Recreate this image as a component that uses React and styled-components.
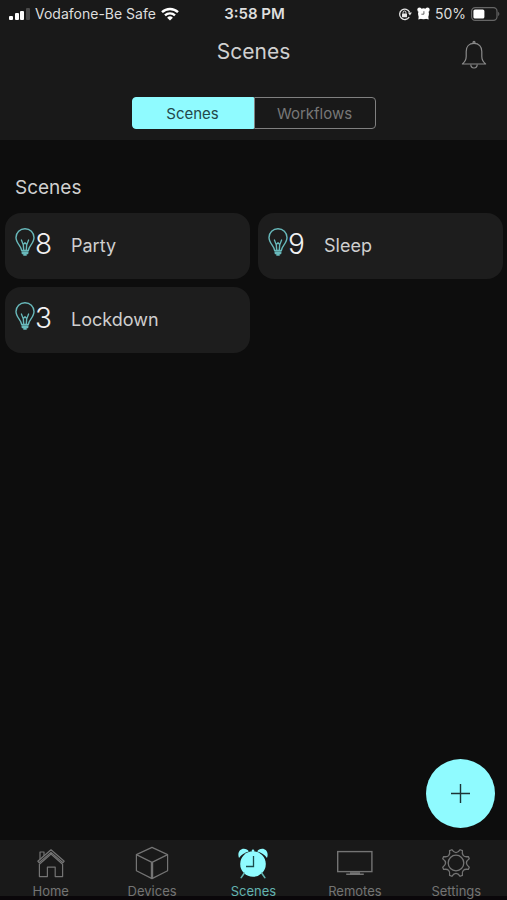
import React, { useState } from "react";
import styled, { createGlobalStyle } from "styled-components";

const GlobalStyle = createGlobalStyle`
  *, *::before, *::after {
    box-sizing: border-box;
  }
  body {
    margin: 0;
    background: #0d0d0d;
    color: #d0d0d0;
    font-family: Inter, "Liberation Sans", sans-serif;
  }
  button {
    font: inherit;
    border: 0;
    padding: 0;
    cursor: pointer;
  }
  svg {
    display: block;
    flex: none;
  }
`;

const Screen = styled.div`
  min-height: 100vh;
  display: flex;
  flex-direction: column;
`;

const Header = styled.header`
  background: #191919;
  padding-bottom: 11px;
`;

const StatusBar = styled.div`
  display: grid;
  grid-template-columns: 1fr auto 1fr;
  align-items: center;
  height: 27px;
  padding: 0 7px 0 9px;
  font-size: 14px;
  color: #dedede;
`;

const StatusGroup = styled.div`
  display: flex;
  align-items: center;
  justify-content: ${({ $end }) => ($end ? "flex-end" : "flex-start")};
  gap: 5px;
  white-space: nowrap;
`;

const Clock = styled.time`
  font-size: 15px;
  font-weight: 600;
`;

const TitleBar = styled.div`
  display: grid;
  grid-template-columns: 48px 1fr 48px;
  align-items: center;
  height: 56px;
  padding: 0 9px;
`;

const Title = styled.h1`
  grid-column: 2;
  margin: 0;
  padding-bottom: 6px;
  text-align: center;
  font-size: 21px;
  line-height: 24px;
  font-weight: 400;
`;

const BellButton = styled.button`
  display: flex;
  justify-content: center;
  background: none;
  color: #8a8a8a;
`;

const Segments = styled.div`
  display: grid;
  grid-template-columns: 1fr 1fr;
  width: 244px;
  height: 32px;
  margin: 14px auto 0;
`;

const Segment = styled.button`
  font-size: 15px;
  color: ${({ $active }) => ($active ? "#24484a" : "#777")};
  background: ${({ $active }) => ($active ? "#8ffbff" : "transparent")};
  border: 1px solid ${({ $active }) => ($active ? "#8ffbff" : "#808080")};

  &:first-child {
    border-radius: 4px 0 0 4px;
  }
  &:last-child {
    border-radius: 0 4px 4px 0;
  }
`;

const Main = styled.main`
  flex: 1;
  padding: 36px 4px 16px 5px;
`;

const SectionTitle = styled.h2`
  margin: 0 0 13px;
  padding-left: 10px;
  font-size: 19px;
  line-height: 24px;
  font-weight: 400;
`;

const SceneGrid = styled.div`
  display: grid;
  grid-template-columns: 1fr 1fr;
  gap: 8px;
`;

const SceneCard = styled.button`
  display: flex;
  align-items: center;
  height: 66px;
  padding: 0 10px;
  border-radius: 16px;
  background: #1d1d1d;
  color: #cfcfcf;
  text-align: left;
`;

const SceneIcon = styled.span`
  padding-bottom: 8px;
  color: #68b9bb;
`;

const DeviceCount = styled.span`
  width: 36px;
  padding-bottom: 4px;
  font-size: 28px;
  font-weight: 300;
  color: #f2f2f2;
`;

const SceneName = styled.span`
  padding-bottom: 2px;
  font-size: 18px;
`;

const AddButton = styled.button`
  position: fixed;
  right: 12px;
  bottom: 72px;
  display: grid;
  place-items: center;
  width: 69px;
  height: 69px;
  border-radius: 50%;
  background: #8ffbff;
  color: #1d3436;
`;

const TabBar = styled.nav`
  position: sticky;
  bottom: 0;
  display: grid;
  grid-template-columns: repeat(5, 1fr);
  height: 60px;
  background: #191919;
  border-bottom: 4px solid #0a070a;
`;

const TabLink = styled.a`
  display: flex;
  flex-direction: column;
  align-items: center;
  padding-top: 6px;
  gap: 4px;
  font-size: 13px;
  line-height: 14px;
  text-decoration: none;
  color: ${({ $active }) => ($active ? "#62b3b0" : "#747474")};
`;

const SignalIcon = () => (
  <svg width="21" height="12" viewBox="0 0 21 12" fill="#fff" aria-hidden="true">
    <rect x="0" y="8" width="4" height="4" rx="1" />
    <rect x="6" y="5" width="4" height="7" rx="1" />
    <rect x="11" y="3" width="4" height="9" rx="1" />
    <rect x="17" y="0" width="4" height="12" rx="1" fill="#4a4a4a" />
  </svg>
);

const WifiIcon = () => (
  <svg width="18" height="14" viewBox="0 0 18 14" fill="none" stroke="#fff" strokeWidth="2.4" aria-hidden="true">
    <path d="M1 5.2a11.5 11.5 0 0 1 16 0" />
    <path d="M4 8.4a7.2 7.2 0 0 1 10 0" />
    <path d="M9 13.6 6.1 10.7a4.1 4.1 0 0 1 5.8 0Z" fill="#fff" stroke="none" />
  </svg>
);

const RotationLockIcon = () => (
  <svg width="14" height="14" viewBox="0 0 14 14" fill="none" stroke="#e6e6e6" strokeWidth="1.3" aria-hidden="true">
    <path d="M11.2 10.2A5.2 5.2 0 1 1 11.6 5.2" />
    <path d="M9.9 5.6h4l-2 2.9Z" fill="#e6e6e6" stroke="none" />
    <rect x="4" y="6.4" width="5" height="3.8" rx=".5" fill="#e6e6e6" stroke="none" />
    <path d="M5.1 6.6V5.4a1.4 1.4 0 0 1 2.8 0v1.2" strokeWidth="1" />
  </svg>
);

const SmallAlarmIcon = () => (
  <svg width="13" height="13" viewBox="0 0 13 13" aria-hidden="true">
    <g fill="#fff">
      <circle cx="6.5" cy="6.8" r="5.5" />
      <circle cx="2.5" cy="2.7" r="2.2" />
      <circle cx="10.5" cy="2.7" r="2.2" />
      <path d="m1.3 12.6.6-4 3 2.8ZM11.7 12.6l-.6-4-3 2.8Z" />
    </g>
    <path d="M6.9 4.2v3H4.4" fill="none" stroke="#555" strokeWidth=".9" />
  </svg>
);

const BatteryIcon = () => (
  <svg width="29" height="14" viewBox="0 0 29 14" aria-hidden="true">
    <rect x=".6" y=".6" width="25.4" height="12.8" rx="3.6" fill="none" stroke="#666" strokeWidth="1.2" />
    <rect x="2.4" y="2.4" width="11" height="9.2" rx="1.6" fill="#fff" />
    <path d="M27.2 4.8a3 3 0 0 1 0 4.4Z" fill="#666" />
  </svg>
);

const BellIcon = () => (
  <svg width="26" height="30" viewBox="0 0 26 30" fill="none" stroke="currentColor" strokeWidth="1.2" strokeLinejoin="round" aria-hidden="true">
    <circle cx="13" cy="2.4" r="1" />
    <path d="M13 3.4c-5 0-7.8 3.4-7.8 8v5.2c0 3-1.4 5.4-3.8 7.4h23.2c-2.4-2-3.8-4.4-3.8-7.4v-5.2c0-4.6-2.8-8-7.8-8Z" />
    <path d="M9.8 24.6a3.2 3.4 0 0 0 6.4 0" />
  </svg>
);

const BulbIcon = () => (
  <svg width="20" height="28" viewBox="0 0 20 28" fill="none" stroke="currentColor" strokeWidth="1.4" strokeLinejoin="round" strokeLinecap="round" aria-hidden="true">
    <path d="M6.6 22.4C6.4 18.4 1 15.2 1 9.6a9 8.9 0 0 1 18 0c0 5.6-5.4 8.8-5.6 12.8Z" />
    <path d="M6.9 24h6.2M7.3 25.5h5.4M8.8 27h2.4" />
    <path d="M8.7 22.2c.2-3.4-.5-7-2.3-10.2M11.3 22.2c-.2-3.4.5-7 2.3-10.2M8.3 16.4l1.7-1.6 1.7 1.6" />
  </svg>
);

const PlusIcon = () => (
  <svg width="20" height="20" viewBox="0 0 20 20" fill="none" stroke="currentColor" strokeWidth="1.4" aria-hidden="true">
    <path d="M9.5 0v19M0 9.5h19" />
  </svg>
);

const HomeIcon = () => (
  <svg width="34" height="34" viewBox="0 0 34 34" fill="none" stroke="currentColor" strokeWidth="1.2" strokeLinejoin="round" aria-hidden="true">
    <path d="M5.4 18.2 17 8l11.6 10.2v12.4h-7.4v-9.4h-7.8v9.4h-8Z" />
    <path d="M17 3.8 3.8 15.2 5 16.7 17 6.4l12 10.3 1.2-1.5Z" />
    <path d="M6 13.2V6h4v3.8" />
  </svg>
);

const CubeIcon = () => (
  <svg width="34" height="34" viewBox="0 0 34 34" fill="none" stroke="currentColor" strokeWidth="1.2" strokeLinejoin="round" aria-hidden="true">
    <path d="M17 1.4 32.6 8.6v16.2L17 32.6 1.4 24.8V8.6Z" />
    <path d="M1.4 8.6 17 16.4l15.6-7.8M16.4 16.4v16M17.6 16.4v16" />
  </svg>
);

const AlarmIcon = () => (
  <svg width="34" height="34" viewBox="0 0 34 34" aria-hidden="true">
    <g fill="#8ffbff">
      <circle cx="17" cy="18" r="12.8" />
      <path d="M3 12C1 6.6 4 2.8 7.8 2.8c2.2 0 4.2 1 5 2.6C8.6 6.4 5.2 8.8 3 12ZM31 12c2-5.4-1-9.2-4.8-9.2-2.2 0-4.2 1-5 2.6 4.2 1 7.6 3.4 9.8 6.6Z" />
      <circle cx="17" cy="4.8" r="1.3" />
    </g>
    <path d="m8.2 27.2-3 4.4M25.8 27.2l3 4.4" stroke="#62b3b0" strokeWidth="1.6" strokeLinecap="round" />
    <path d="M17.5 10v10.5H10" fill="none" stroke="#1c4b4d" strokeWidth="1.3" />
  </svg>
);

const TvIcon = () => (
  <svg width="36" height="34" viewBox="0 0 36 34" fill="none" stroke="currentColor" strokeWidth="1.4" aria-hidden="true">
    <rect x=".7" y="5.6" width="34.2" height="20" />
    <path d="M13 27h10M9.2 28.3h17.6" strokeWidth="1.6" />
  </svg>
);

// eight narrow teeth joined by rounded valleys
const gearPath = () => {
  const at = (degrees, radius) => {
    const angle = (degrees * Math.PI) / 180;
    return `${(17 + radius * Math.cos(angle)).toFixed(2)} ${(17 + radius * Math.sin(angle)).toFixed(2)}`;
  };
  let d = `M${at(17.5, 13.9)}`;
  for (let i = 0; i < 8; i += 1) {
    const tooth = i * 45 + 22.5;
    d += `L${at(tooth + 5, 13.9)}`;
    d += `C${at(tooth + 13, 9.6)} ${at(tooth + 32, 9.6)} ${at(tooth + 40, 13.9)}`;
  }
  return `${d}Z`;
};

const GearIcon = () => (
  <svg width="34" height="34" viewBox="0 0 34 34" fill="none" stroke="currentColor" strokeWidth="1.3" strokeLinejoin="round" aria-hidden="true">
    <path d={gearPath()} />
    <circle cx="17" cy="17" r="7.8" />
  </svg>
);

const scenes = [
  { name: "Party", devices: 8 },
  { name: "Sleep", devices: 9 },
  { name: "Lockdown", devices: 3 },
];

const tabs = [
  { label: "Home", icon: HomeIcon },
  { label: "Devices", icon: CubeIcon },
  { label: "Scenes", icon: AlarmIcon },
  { label: "Remotes", icon: TvIcon },
  { label: "Settings", icon: GearIcon },
];

const App = () => {
  const [view, setView] = useState("Scenes");

  return (
    <>
      <GlobalStyle />
      <Screen>
        <Header>
          <StatusBar>
            <StatusGroup>
              <SignalIcon />
              <span>Vodafone-Be Safe</span>
              <WifiIcon />
            </StatusGroup>
            <Clock>3:58 PM</Clock>
            <StatusGroup $end>
              <RotationLockIcon />
              <SmallAlarmIcon />
              <span>50%</span>
              <BatteryIcon />
            </StatusGroup>
          </StatusBar>
          <TitleBar>
            <Title>Scenes</Title>
            <BellButton type="button" aria-label="Notifications">
              <BellIcon />
            </BellButton>
          </TitleBar>
          <Segments>
            {["Scenes", "Workflows"].map((name) => (
              <Segment
                key={name}
                type="button"
                aria-pressed={view === name}
                $active={view === name}
                onClick={() => setView(name)}
              >
                {name}
              </Segment>
            ))}
          </Segments>
        </Header>
        <Main>
          <SectionTitle>Scenes</SectionTitle>
          <SceneGrid>
            {scenes.map(({ name, devices }) => (
              <SceneCard key={name} type="button">
                <SceneIcon>
                  <BulbIcon />
                </SceneIcon>
                <DeviceCount>{devices}</DeviceCount>
                <SceneName>{name}</SceneName>
              </SceneCard>
            ))}
          </SceneGrid>
        </Main>
        <TabBar>
          {tabs.map(({ label, icon: Icon }) => (
            <TabLink
              key={label}
              href={`#${label.toLowerCase()}`}
              $active={label === "Scenes"}
              aria-current={label === "Scenes" ? "page" : undefined}
            >
              <Icon />
              {label}
            </TabLink>
          ))}
        </TabBar>
        <AddButton type="button" aria-label="Add scene">
          <PlusIcon />
        </AddButton>
      </Screen>
    </>
  );
};

export default App;
